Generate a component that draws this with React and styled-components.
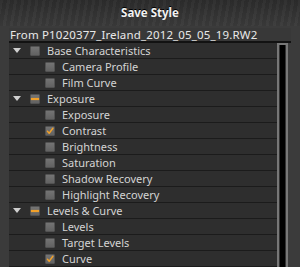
import React from 'react';
import styled, { createGlobalStyle } from 'styled-components';

const groups = [
  {
    name: 'Base Characteristics',
    state: 'off',
    items: [
      { name: 'Camera Profile', checked: false },
      { name: 'Film Curve', checked: false },
    ],
  },
  {
    name: 'Exposure',
    state: 'mixed',
    items: [
      { name: 'Exposure', checked: false },
      { name: 'Contrast', checked: true },
      { name: 'Brightness', checked: false },
      { name: 'Saturation', checked: false },
      { name: 'Shadow Recovery', checked: false },
      { name: 'Highlight Recovery', checked: false },
    ],
  },
  {
    name: 'Levels & Curve',
    state: 'mixed',
    items: [
      { name: 'Levels', checked: false },
      { name: 'Target Levels', checked: false },
      { name: 'Curve', checked: true },
    ],
  },
];

function Check({ state }) {
  return (
    <Box>
      {state === 'on' && (
        <svg width="10" height="10" viewBox="0 0 10 10">
          <path
            d="M1.8 5.2 L4 7.8 L8.6 1.6"
            fill="none"
            stroke="#f0a02a"
            strokeWidth="1.8"
            strokeLinecap="round"
            strokeLinejoin="round"
          />
        </svg>
      )}
      {state === 'mixed' && <Dash />}
    </Box>
  );
}

function App() {
  return (
    <>
      <GlobalStyle />
      <Window>
        <TitleBar>Save Style</TitleBar>
        <Body>
          <Header>From P1020377_Ireland_2012_05_05_19.RW2</Header>
          <Content>
            <List>
              {groups.map((g) => (
                <React.Fragment key={g.name}>
                  <Row>
                    <Disclosure />
                    <Check state={g.state} />
                    <Label>{g.name}</Label>
                  </Row>
                  {g.items.map((it) => (
                    <Row key={g.name + it.name} $child>
                      <Check state={it.checked ? 'on' : 'off'} />
                      <Label>{it.name}</Label>
                    </Row>
                  ))}
                </React.Fragment>
              ))}
            </List>
            <Scrollbar />
          </Content>
        </Body>
      </Window>
    </>
  );
}

export default App;

const GlobalStyle = createGlobalStyle`
  html, body {
    margin: 0;
    padding: 0;
    background: #3a3a3a;
  }
`;

const Window = styled.div`
  width: 300px;
  height: 267px;
  overflow: hidden;
  background: #3b3b3b;
  font-family: 'Noto Sans', 'DejaVu Sans', sans-serif;
  display: flex;
  flex-direction: column;
`;

const TitleBar = styled.div`
  height: 26px;
  flex-shrink: 0;
  display: flex;
  align-items: center;
  justify-content: center;
  padding-bottom: 2px;
  box-sizing: border-box;
  color: #f2f2f2;
  font-weight: bold;
  font-size: 11.5px;
  background:
    repeating-linear-gradient(100deg, rgba(255,255,255,0.025) 0 3px, rgba(0,0,0,0.04) 3px 7px),
    linear-gradient(#2c2c2c, #353535 60%, #3a3a3a);
  text-shadow: 0 -1px 0 #000;
`;

const Body = styled.div`
  flex: 1;
  display: flex;
  flex-direction: column;
  padding: 2px 9px 0 9px;
  min-height: 0;
`;

const Header = styled.div`
  height: 13px;
  line-height: 14px;
  background: #383838;
  border-bottom: 2px solid #121212;
  color: #e8e8e8;
  font-size: 11.5px;
  letter-spacing: 0.15px;
  padding-left: 1px;
  white-space: nowrap;
  overflow: hidden;
`;

const Content = styled.div`
  flex: 1;
  display: flex;
  min-height: 0;
`;

const List = styled.div`
  flex: 1;
  background: #2e2e2e;
  overflow: hidden;
`;

const Row = styled.div`
  height: 15px;
  border-bottom: 1px solid #1b1b1b;
  display: flex;
  align-items: center;
  padding-left: ${(p) => (p.$child ? '36px' : '4px')};
`;

const Disclosure = styled.span`
  width: 0;
  height: 0;
  border-left: 4px solid transparent;
  border-right: 4px solid transparent;
  border-top: 5px solid #cfcfcf;
  margin-right: 9px;
`;

const Box = styled.span`
  width: 10px;
  height: 10px;
  box-sizing: border-box;
  border: 1px solid #525252;
  border-radius: 1px;
  background: linear-gradient(#747474, #626262);
  display: flex;
  align-items: center;
  justify-content: center;
  margin-right: 7px;
  flex-shrink: 0;
`;

const Dash = styled.span`
  width: 8px;
  height: 2px;
  background: #f0a02a;
  box-shadow: 0 0 1px #f0a02a;
`;

const Label = styled.span`
  color: #d4d4d4;
  font-size: 11px;
  white-space: nowrap;
`;

const Scrollbar = styled.div`
  width: 11px;
  box-sizing: border-box;
  border: 2px solid #777;
  border-bottom: none;
  background: #000;
  box-shadow: inset 1px 0 0 #333, inset -1px 0 0 #333;
  margin-right: 3px;
`;
